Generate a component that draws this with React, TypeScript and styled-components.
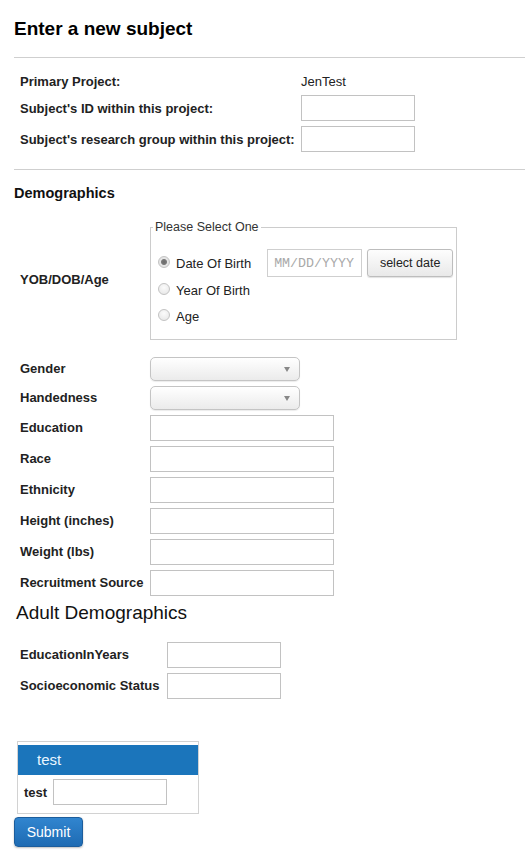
import styled, { createGlobalStyle } from "styled-components";

const GlobalStyle = createGlobalStyle`
  html, body {
    margin: 0;
    padding: 0;
    background: #ffffff;
    font-family: "Liberation Sans", Arial, sans-serif;
    color: #222;
  }
  * {
    box-sizing: border-box;
  }
`;

const demographics = [
  { label: "Education" },
  { label: "Race" },
  { label: "Ethnicity" },
  { label: "Height (inches)" },
  { label: "Weight (lbs)" },
  { label: "Recruitment Source" },
];

export default function App() {
  return (
    <>
      <GlobalStyle />
      <Page>
        <Title>Enter a new subject</Title>
        <Divider />

        <ProjectTable>
          <Label>Primary Project:</Label>
          <Value>JenTest</Value>
          <Label>Subject's ID within this project:</Label>
          <TextInput width={114} />
          <Label>Subject's research group within this project:</Label>
          <TextInput width={114} />
        </ProjectTable>
        <Divider $gap={17} />

        <SectionTitle>Demographics</SectionTitle>

        <FieldRow $labelWidth={130} $tall>
          <Label>YOB/DOB/Age</Label>
          <Fieldset>
            <Legend>Please Select One</Legend>
            <Choices>
              <ChoiceRow $height={28}>
                <Radio type="radio" name="yob" defaultChecked />
                <ChoiceLabel>Date Of Birth</ChoiceLabel>
                <DateInput placeholder="MM/DD/YYYY" />
                <DateButton>select date</DateButton>
              </ChoiceRow>
              <ChoiceRow $height={26}>
                <Radio type="radio" name="yob" />
                <ChoiceLabel>Year Of Birth</ChoiceLabel>
              </ChoiceRow>
              <ChoiceRow $height={26}>
                <Radio type="radio" name="yob" />
                <ChoiceLabel>Age</ChoiceLabel>
              </ChoiceRow>
            </Choices>
          </Fieldset>
        </FieldRow>

        <FieldList>
          <FieldRow $labelWidth={130} $height={29}>
            <Label>Gender</Label>
            <SelectWrap>
              <Select />
              <Caret />
            </SelectWrap>
          </FieldRow>
          <FieldRow $labelWidth={130} $height={29}>
            <Label>Handedness</Label>
            <SelectWrap>
              <Select />
              <Caret />
            </SelectWrap>
          </FieldRow>
          {demographics.map((d) => (
            <FieldRow key={d.label} $labelWidth={130} $height={31}>
              <Label>{d.label}</Label>
              <TextInput width={184} />
            </FieldRow>
          ))}
        </FieldList>

        <SubTitle>Adult Demographics</SubTitle>
        <FieldList $indent>
          <FieldRow $labelWidth={147} $height={31}>
            <Label>EducationInYears</Label>
            <TextInput width={114} />
          </FieldRow>
          <FieldRow $labelWidth={147} $height={31}>
            <Label>Socioeconomic Status</Label>
            <TextInput width={114} />
          </FieldRow>
        </FieldList>

        <Panel>
          <PanelHeader>test</PanelHeader>
          <PanelBody>
            <Label>test</Label>
            <TextInput width={114} />
          </PanelBody>
        </Panel>
        <SubmitButton>Submit</SubmitButton>
      </Page>
    </>
  );
}

const Page = styled.div`
  padding: 0 0 8px 14px;
  width: 525px;
`;

const Title = styled.h2`
  margin: 17px 0 0;
  font-size: 19px;
  line-height: 23px;
  font-weight: bold;
  color: #000;
`;

const Divider = styled.div<{ $gap?: number }>`
  height: 1px;
  background: #cfcfcf;
  margin-top: ${(p) => p.$gap ?? 17}px;
`;

const Label = styled.div`
  font-size: 13px;
  font-weight: bold;
  color: #222;
  white-space: nowrap;
`;

const Value = styled.div`
  font-size: 13px;
  color: #222;
`;

const ProjectTable = styled.div`
  display: grid;
  grid-template-columns: 281px auto;
  grid-template-rows: 18px 26px 26px;
  row-gap: 5px;
  align-items: center;
  justify-items: start;
  margin-top: 14px;
  padding-left: 6px;
`;

const TextInput = styled.input<{ width: number }>`
  width: ${(p) => p.width}px;
  height: 26px;
  border: 1px solid #c2c2c2;
  background: #fff;
  padding: 2px 4px;
  font-family: "Liberation Sans", Arial, sans-serif;
  font-size: 13px;
  outline: none;
`;

const SectionTitle = styled.h3`
  margin: 15px 0 0;
  font-size: 14.5px;
  line-height: 16px;
  font-weight: bold;
  color: #111;
`;

const SubTitle = styled.h3`
  margin: 3px 0 0 2px;
  font-size: 19px;
  line-height: 23px;
  font-weight: normal;
  color: #111;
`;

const FieldList = styled.div<{ $indent?: boolean }>`
  display: flex;
  flex-direction: column;
  margin-top: ${(p) => (p.$indent ? 15 : 14)}px;
`;

const FieldRow = styled.div<{ $labelWidth: number; $height?: number; $tall?: boolean }>`
  display: grid;
  grid-template-columns: ${(p) => p.$labelWidth}px auto;
  align-items: center;
  justify-items: start;
  padding-left: 6px;
  height: ${(p) => (p.$height ? `${p.$height}px` : "auto")};
  margin-top: ${(p) => (p.$tall ? 18 : 0)}px;
`;

const Fieldset = styled.fieldset`
  margin: 0;
  width: 307px;
  border: 1px solid #cccccc;
  padding: 0 0 10px 6px;
`;

const Legend = styled.legend`
  font-size: 12.5px;
  line-height: 16px;
  color: #333;
  padding: 0 2px 0 2px;
  margin-left: -4px;
`;

const Choices = styled.div`
  display: flex;
  flex-direction: column;
  margin-top: 14px;
`;

const ChoiceRow = styled.div<{ $height: number }>`
  display: flex;
  align-items: center;
  white-space: nowrap;
  height: ${(p) => p.$height}px;

  & > * {
    flex-shrink: 0;
  }
`;

const Radio = styled.input`
  appearance: none;
  -webkit-appearance: none;
  width: 12px;
  height: 12px;
  margin: 0 6px 0 1px;
  border-radius: 50%;
  border: 1px solid #c3c3c3;
  background: radial-gradient(circle at 50% 35%, #fbfbfb 0%, #e4e4e4 100%);
  position: relative;
  top: -1px;

  &:checked {
    background: radial-gradient(circle, #6b6b6b 0, #7a7a7a 2.5px, #e6e6e6 3.5px, #dedede 100%);
  }
`;

const ChoiceLabel = styled.span`
  font-size: 13px;
  color: #222;
`;

const DateInput = styled.input`
  width: 95px;
  height: 28px;
  margin-left: 16px;
  border: 1px solid #cfcfcf;
  padding: 0 6px;
  font-family: "Liberation Mono", "Courier New", monospace;
  font-size: 13.3px;
  outline: none;

  &::placeholder {
    color: #a9a9a9;
  }
`;

const DateButton = styled.button`
  height: 28px;
  width: 86px;
  margin-left: 5px;
  border: 1px solid #bdbdbd;
  border-radius: 3px;
  background: linear-gradient(#fdfdfd, #e9e9e9);
  box-shadow: 0 1px 1px rgba(0, 0, 0, 0.12);
  font-family: "Liberation Sans", Arial, sans-serif;
  font-size: 12.5px;
  color: #222;
  padding: 0;
`;

const SelectWrap = styled.div`
  position: relative;
  width: 150px;
  height: 24px;
`;

const Select = styled.select`
  appearance: none;
  -webkit-appearance: none;
  width: 100%;
  height: 100%;
  border: 1px solid #c4c4c4;
  border-radius: 5px;
  background: linear-gradient(#ffffff, #ebebeb);
  box-shadow: 0 1px 1px rgba(0, 0, 0, 0.08);
  outline: none;
`;

const Caret = styled.span`
  position: absolute;
  right: 10px;
  top: 10px;
  width: 0;
  height: 0;
  border-left: 3.5px solid transparent;
  border-right: 3.5px solid transparent;
  border-top: 5px solid #888;
  pointer-events: none;
`;

const Panel = styled.div`
  width: 182px;
  margin: 40px 0 0 3px;
  border: 1px solid #d2d2d2;
  padding-top: 3px;
`;

const PanelHeader = styled.div`
  height: 30px;
  background: #1b75bb;
  color: #eaf5ff;
  font-size: 15px;
  line-height: 30px;
  padding-left: 19px;
`;

const PanelBody = styled.div`
  display: flex;
  align-items: center;
  gap: 6px;
  padding: 4px 0 8px 6px;
`;

const SubmitButton = styled.button`
  display: block;
  margin-top: 3px;
  width: 69px;
  height: 30px;
  border: 1px solid #1c5d9c;
  border-radius: 4px;
  background: linear-gradient(#3185cf, #1e6bb3);
  box-shadow: 0 1px 2px rgba(0, 0, 0, 0.25);
  color: #fff;
  font-family: "Liberation Sans", Arial, sans-serif;
  font-size: 14px;
  padding: 0;
`;
